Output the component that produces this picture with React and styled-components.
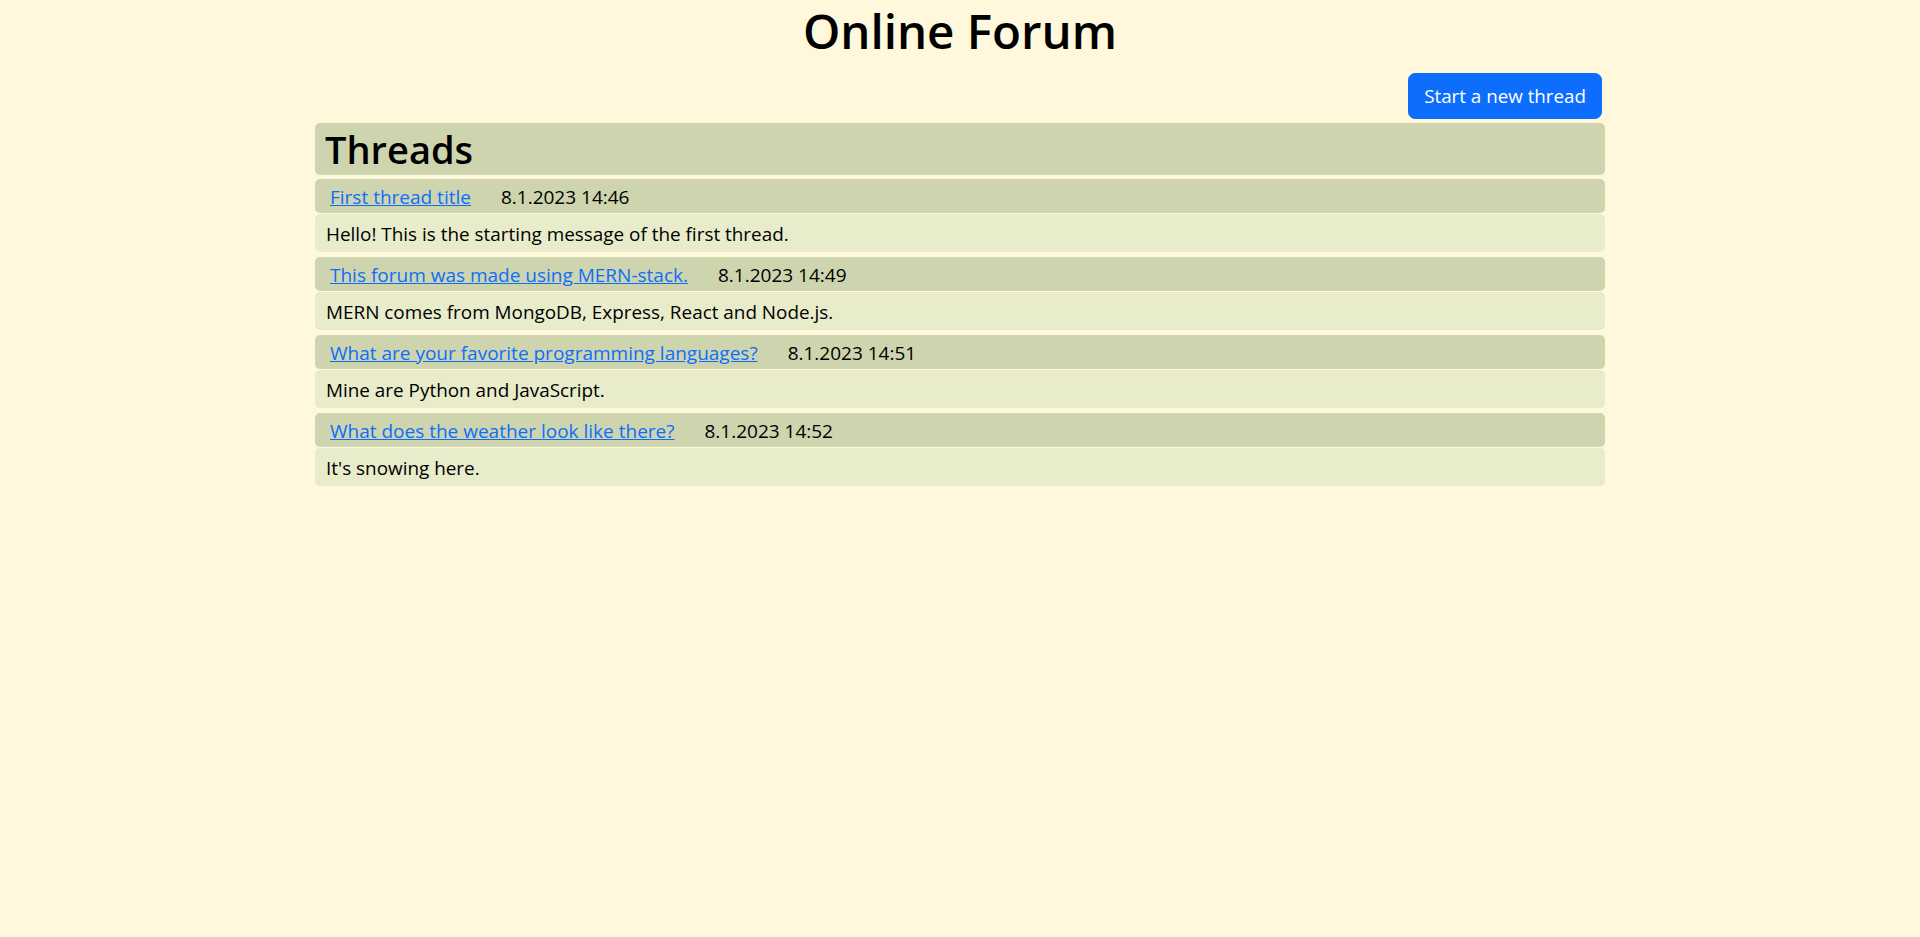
import React from 'react';
import styled, {createGlobalStyle} from 'styled-components';

const GlobalStyle = createGlobalStyle`
  body {
    margin: 0;
    background: #fff8dc;
    font-family: "Segoe UI", "Open Sans", sans-serif;
    color: #000;
  }
`

const Page = styled.div`
  display: flex;
  flex-direction: column;
  align-items: center;
`

const Title = styled.h1`
  margin: 0;
  font-size: 47.5px;
  font-weight: 600;
  line-height: 62px;
  text-align: center;
`

const Container = styled.div`
  width: 1290px;
  display: flex;
  flex-direction: column;
`

const Toolbar = styled.div`
  display: flex;
  justify-content: flex-end;
  padding: 11px 3px 4px 0;
`

const Button = styled.button`
  font-family: inherit;
  font-size: 18.8px;
  line-height: 30px;
  height: 46px;
  padding: 0 15px;
  color: #fff;
  background: #0d6efd;
  border: 1px solid #0d6efd;
  border-radius: 7px;
  cursor: pointer;
`

const ThreadsHeader = styled.h2`
  margin: 0 0 4px;
  height: 52px;
  box-sizing: border-box;
  padding: 2px 10px 0;
  font-size: 38px;
  font-weight: 600;
  line-height: 48px;
  background: #ced4ad;
  border-radius: 5px;
`

const Thread = styled.div`
  display: flex;
  flex-direction: column;
  gap: 1px;
  margin-bottom: 5px;
`

const ThreadHead = styled.div`
  display: flex;
  align-items: center;
  gap: 30px;
  height: 34px;
  padding: 1px 15px 0;
  box-sizing: border-box;
  font-size: 19px;
  background: #ced4ad;
  border-radius: 5px;
  a {
    color: #0d6efd;
    text-decoration: underline;
  }
`

const ThreadBody = styled.div`
  height: 38px;
  box-sizing: border-box;
  padding: 5px 11px 3px;
  font-size: 18.9px;
  line-height: 30px;
  background: #e8eccb;
  border-radius: 5px;
`

const threads = [
    {title: 'First thread title', date: '8.1.2023 14:46', message: 'Hello! This is the starting message of the first thread.'},
    {title: 'This forum was made using MERN-stack.', date: '8.1.2023 14:49', message: 'MERN comes from MongoDB, Express, React and Node.js.'},
    {title: 'What are your favorite programming languages?', date: '8.1.2023 14:51', message: 'Mine are Python and JavaScript.'},
    {title: 'What does the weather look like there?', date: '8.1.2023 14:52', message: "It's snowing here."},
]

const App = () => (
    <Page>
        <GlobalStyle/>
        <Title>Online Forum</Title>
        <Container>
            <Toolbar>
                <Button>Start a new thread</Button>
            </Toolbar>
            <ThreadsHeader>Threads</ThreadsHeader>
            {threads.map(t => (
                <Thread key={t.date}>
                    <ThreadHead>
                        <a href="#">{t.title}</a>
                        <span>{t.date}</span>
                    </ThreadHead>
                    <ThreadBody>{t.message}</ThreadBody>
                </Thread>
            ))}
        </Container>
    </Page>
)

export default App
